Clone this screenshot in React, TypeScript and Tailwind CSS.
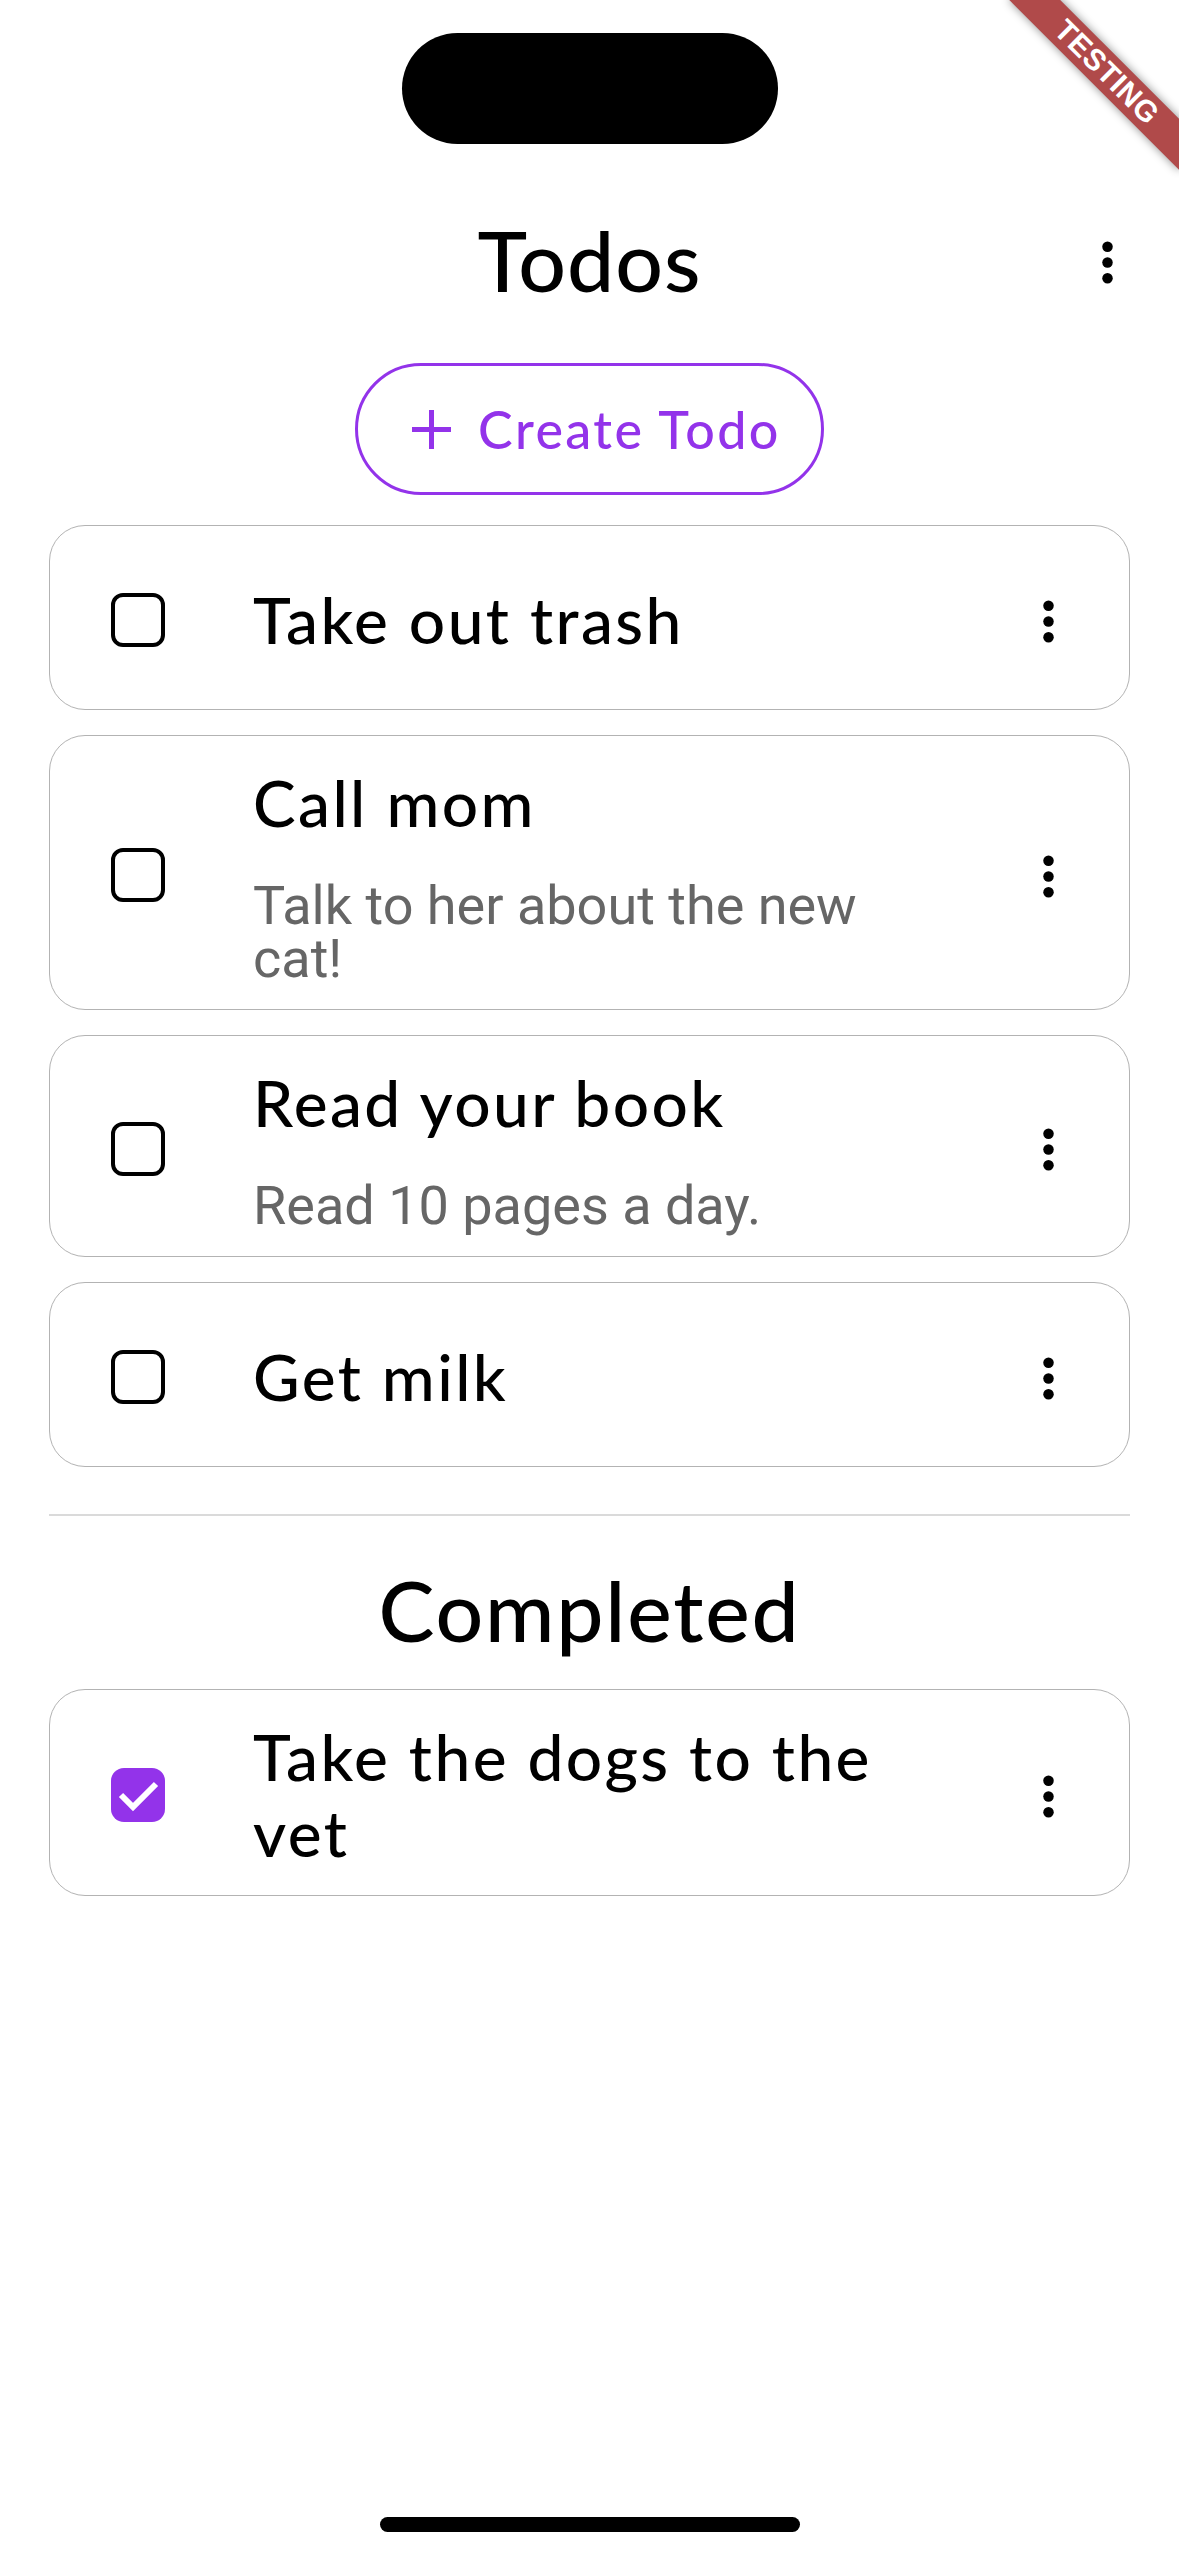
import React from "react";

type Todo = { title: string; subtitle?: string; done?: boolean };

const open: Todo[] = [
  { title: "Take out trash" },
  { title: "Call mom", subtitle: "Talk to her about the new cat!" },
  { title: "Read your book", subtitle: "Read 10 pages a day." },
  { title: "Get milk" },
];

const completed: Todo[] = [{ title: "Take the dogs to the vet", done: true }];

function MoreVert() {
  return (
    <svg width="63" height="63" viewBox="0 0 24 24" aria-hidden="true">
      <circle cx="12" cy="6" r="2" fill="#000" />
      <circle cx="12" cy="12" r="2" fill="#000" />
      <circle cx="12" cy="18" r="2" fill="#000" />
    </svg>
  );
}

function Checkbox({ checked }: { checked?: boolean }) {
  if (checked) {
    return (
      <div className="flex h-[54px] w-[54px] shrink-0 items-center justify-center rounded-[13px] bg-[#9333ea]">
        <svg width="54" height="54" viewBox="0 0 54 54" aria-hidden="true">
          <polyline
            points="10,27 22,39 45,16"
            fill="none"
            stroke="#fff"
            strokeWidth="6"
            strokeLinejoin="miter"
          />
        </svg>
      </div>
    );
  }
  return <div className="h-[54px] w-[54px] shrink-0 rounded-[12px] border-[4px] border-black" />;
}

function TodoCard({ todo }: { todo: Todo }) {
  return (
    <div className="mx-[49px] flex items-center rounded-[36px] border border-[#b3b3b3] pt-[29px] pb-[24px] pl-[61px] pr-[49px]">
      <div className="flex min-h-[130px] flex-1 items-center">
        <Checkbox checked={todo.done} />
        <div className="ml-[88px] flex flex-1 flex-col">
          <div className="font-['Lato',sans-serif] text-[64px] font-medium leading-[76px] tracking-[2.4px] text-black">
            {todo.title}
          </div>
          {todo.subtitle && (
            <div className="mt-[38px] font-['Roboto',sans-serif] text-[54px] leading-[53px] text-[#666666]">
              {todo.subtitle}
            </div>
          )}
        </div>
        <div className="ml-[86px] flex h-[63px] w-[63px] shrink-0 items-center justify-center pt-[2px]">
          <MoreVert />
        </div>
      </div>
    </div>
  );
}

export default function App() {
  return (
    <div className="relative h-[2556px] w-full overflow-hidden bg-white">
      {/* status area */}
      <div className="flex justify-center pt-[33px]">
        <div className="h-[111px] w-[376px] rounded-full bg-black" />
      </div>

      {/* header */}
      <div className="mt-[66px] grid grid-cols-[1fr_auto_1fr] items-center">
        <div />
        <h1 className="font-['Lato',sans-serif] text-[84px] font-medium leading-[100px] tracking-[1px] text-black">
          Todos
        </h1>
        <div className="flex justify-end pr-[40px] pt-[4px]">
          <MoreVert />
        </div>
      </div>

      {/* create button */}
      <div className="mt-[53px] flex justify-center">
        <button className="flex h-[132px] w-[469px] items-center justify-start rounded-full border-[3px] border-[#9333ea] pl-[54px] text-[#9333ea]">
          <svg width="39" height="39" viewBox="0 0 39 39" aria-hidden="true" className="shrink-0">
            <line x1="0" y1="19.5" x2="39" y2="19.5" stroke="#9333ea" strokeWidth="5" />
            <line x1="19.5" y1="0" x2="19.5" y2="39" stroke="#9333ea" strokeWidth="5" />
          </svg>
          <span className="ml-[27px] whitespace-nowrap font-['Lato',sans-serif] text-[52px] font-medium leading-[62px] tracking-[2.4px]">
            Create Todo
          </span>
        </button>
      </div>

      {/* open todos */}
      <div className="mt-[30px] flex flex-col gap-[25px]">
        {open.map((t) => (
          <TodoCard key={t.title} todo={t} />
        ))}
      </div>

      <div className="mx-[49px] mt-[47px] h-[2px] bg-[#dadada]" />

      <h2 className="mt-[44px] text-center font-['Lato',sans-serif] text-[84px] font-medium leading-[100px] tracking-[1.8px] text-black">
        Completed
      </h2>

      <div className="mt-[29px] flex flex-col gap-[25px]">
        {completed.map((t) => (
          <TodoCard key={t.title} todo={t} />
        ))}
      </div>

      {/* debug banner */}
      <div className="pointer-events-none absolute right-[-120px] top-[84px] flex h-[36px] w-[240px] origin-[120px_-84px] rotate-45 items-center justify-center bg-[#b04a4a] shadow-[0_0_10px_rgba(0,0,0,0.45)]">
        <span className="font-['Liberation_Sans',sans-serif] text-[30px] font-black leading-none tracking-[0.5px] text-white">
          TESTING
        </span>
      </div>

      {/* home indicator */}
      <div className="absolute bottom-[24px] left-[380px] h-[15px] w-[420px] rounded-full bg-black" />
    </div>
  );
}
